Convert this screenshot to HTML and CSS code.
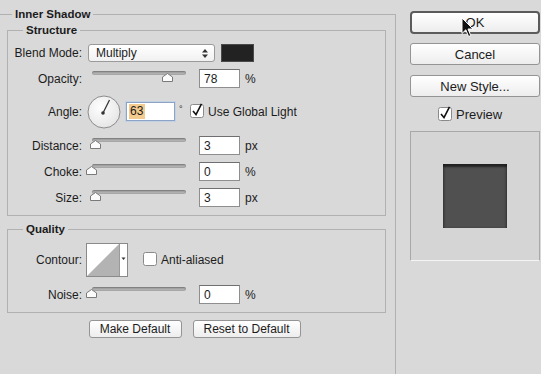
FILE: index.html
```html
<!DOCTYPE html>
<html lang="en">
<head>
    <meta charset="UTF-8">
    <title>Layer Style - Inner Shadow</title>
    <link rel="stylesheet" href="styles.css">
</head>
<body>
  <div class="dialog">

    <!-- left side: settings -->
    <div class="main">
      <fieldset class="group outer">
        <legend>Inner Shadow</legend>

        <fieldset class="group box structure">
          <legend>Structure</legend>

          <div class="row row-blend">
            <span class="label">Blend Mode:</span>
            <div class="select">
              <span>Multiply</span>
              <svg width="6" height="9" viewBox="0 0 6 9"><path d="M3 0 L6 3.5 H0 Z M0 5.5 H6 L3 9 Z" fill="#333"/></svg>
            </div>
            <span class="swatch"></span>
          </div>

          <div class="row">
            <span class="label">Opacity:</span>
            <div class="slider">
              <span class="track"></span>
              <svg class="thumb" style="left:70px" width="11" height="9" viewBox="0 0 11 9"><path d="M0.5 8.5 V4 L5.5 0.5 L10.5 4 V8.5 Z" fill="#fbfbfb" stroke="#7a7a7a"/></svg>
            </div>
            <span class="field">78</span>
            <span class="unit">%</span>
          </div>

          <div class="row row-angle">
            <span class="label">Angle:</span>
            <svg class="dial" width="34" height="34" viewBox="0 0 34 34">
              <defs>
                <radialGradient id="dialFill" cx="0.4" cy="0.35" r="0.7">
                  <stop offset="0" stop-color="#ffffff"/>
                  <stop offset="1" stop-color="#e4e4e4"/>
                </radialGradient>
              </defs>
              <circle cx="17" cy="17" r="16" fill="url(#dialFill)" stroke="#8c8c8c"/>
              <line x1="16" y1="18" x2="22.5" y2="5" stroke="#333" stroke-width="1.2"/>
              <circle cx="16" cy="18" r="1.8" fill="#333"/>
            </svg>
            <span class="field field-angle"><span class="sel">63</span></span>
            <span class="deg">°</span>
            <svg class="check" width="14" height="15" viewBox="0 0 14 15"><rect x="0.5" y="1.5" width="13" height="13" rx="2" fill="#fff" stroke="#8a8a8a"/><path d="M3 8 L6 11.5 L11.5 0.8" fill="none" stroke="#111" stroke-width="1.6"/></svg>
            <span class="check-text">Use Global Light</span>
          </div>

          <div class="row row-distance">
            <span class="label">Distance:</span>
            <div class="slider">
              <span class="track"></span>
              <svg class="thumb" style="left:-2px" width="11" height="9" viewBox="0 0 11 9"><path d="M0.5 8.5 V4 L5.5 0.5 L10.5 4 V8.5 Z" fill="#fbfbfb" stroke="#7a7a7a"/></svg>
            </div>
            <span class="field">3</span>
            <span class="unit">px</span>
          </div>

          <div class="row">
            <span class="label">Choke:</span>
            <div class="slider">
              <span class="track"></span>
              <svg class="thumb" style="left:-6px" width="11" height="9" viewBox="0 0 11 9"><path d="M0.5 8.5 V4 L5.5 0.5 L10.5 4 V8.5 Z" fill="#fbfbfb" stroke="#7a7a7a"/></svg>
            </div>
            <span class="field">0</span>
            <span class="unit">%</span>
          </div>

          <div class="row">
            <span class="label">Size:</span>
            <div class="slider">
              <span class="track"></span>
              <svg class="thumb" style="left:-2px" width="11" height="9" viewBox="0 0 11 9"><path d="M0.5 8.5 V4 L5.5 0.5 L10.5 4 V8.5 Z" fill="#fbfbfb" stroke="#7a7a7a"/></svg>
            </div>
            <span class="field">3</span>
            <span class="unit">px</span>
          </div>
        </fieldset>

        <fieldset class="group box quality">
          <legend>Quality</legend>

          <div class="row row-contour">
            <span class="label">Contour:</span>
            <svg class="contour" width="42" height="34" viewBox="0 0 42 34">
              <rect x="0.5" y="0.5" width="41" height="33" fill="#fff" stroke="#8a8a8a"/>
              <path d="M33 1 V33 H1 Z" fill="#b3b3b3"/>
              <line x1="33.5" y1="1" x2="33.5" y2="33" stroke="#9a9a9a"/>
              <path d="M35.5 14.5 H39.5 L37.5 17 Z" fill="#333"/>
            </svg>
            <svg class="check check-aa" width="14" height="15" viewBox="0 0 14 15"><rect x="0.5" y="1.5" width="13" height="13" rx="2" fill="#fff" stroke="#8a8a8a"/></svg>
            <span class="check-text">Anti-aliased</span>
          </div>

          <div class="row row-noise">
            <span class="label">Noise:</span>
            <div class="slider">
              <span class="track"></span>
              <svg class="thumb" style="left:-6px" width="11" height="9" viewBox="0 0 11 9"><path d="M0.5 8.5 V4 L5.5 0.5 L10.5 4 V8.5 Z" fill="#fbfbfb" stroke="#7a7a7a"/></svg>
            </div>
            <span class="field">0</span>
            <span class="unit">%</span>
          </div>
        </fieldset>

        <div class="defaults">
          <span class="btn small make">Make Default</span>
          <span class="btn small reset">Reset to Default</span>
        </div>
      </fieldset>
    </div>

    <!-- right side: buttons + preview -->
    <div class="side">
      <span class="btn big ok">OK</span>
      <span class="btn big cancel">Cancel</span>
      <span class="btn big newstyle">New Style...</span>
      <div class="preview-row">
        <svg class="check" width="14" height="15" viewBox="0 0 14 15"><rect x="0.5" y="1.5" width="13" height="13" rx="2" fill="#fff" stroke="#8a8a8a"/><path d="M3 8 L6 11.5 L11.5 0.8" fill="none" stroke="#111" stroke-width="1.6"/></svg>
        <span class="preview-text">Preview</span>
      </div>
      <div class="preview">
        <div class="sample"></div>
      </div>
    </div>

    <!-- mouse pointer over OK -->
    <svg class="cursor" width="13" height="21" viewBox="0 0 13 21">
      <path d="M1 1 V16.5 L4.8 12.8 L7.6 19.5 L9.8 18.6 L7 12 H12 Z" fill="#111" stroke="#fff" stroke-width="1"/>
    </svg>
  </div>
</body>
</html>
```

FILE: styles.css
```css
body {
  margin: 0;
  background-color: #d9d9d9;
  font-family: "Liberation Sans", Arial, sans-serif;
  font-size: 12px;
  color: #1c1c1c;
  overflow: hidden;
}

.dialog {
  position: relative;
  display: flex;
  width: 541px;
  height: 374px;
}

/* group boxes */
.group {
  border: 1px solid #b1b1b1;
  padding: 0;
  min-width: 0;
}

.group legend {
  font-weight: bold;
  font-size: 11.5px;
  line-height: 14px;
  padding: 0 3px;
}

.main {
  width: 396px;
  flex: none;
}

.outer {
  margin: 7px 0 0 0;
  border-left: none;
  border-bottom: none;
  height: 367px;
  box-sizing: border-box;
}

.outer > legend {
  margin-left: 12px;
}

.box {
  margin: 2px 9px 0 7px;
}

.box > legend {
  margin-left: 15px;
}

.structure {
  padding: 7px 0 8px 0;
}

.quality {
  margin-top: 6px;
  padding: 7px 0 8px 0;
}

/* rows */
.row {
  display: flex;
  align-items: center;
  height: 19px;
}

.row + .row {
  margin-top: 7px;
}

.row-blend {
  height: 18px;
}

.row-angle,
.row-contour {
  height: 33px;
}

.row-distance {
  margin-top: 8px !important;
}

.row-noise {
  margin-top: 9px !important;
}

.label {
  width: 74px;
  flex: none;
  text-align: right;
}

.select {
  display: flex;
  align-items: center;
  justify-content: space-between;
  box-sizing: border-box;
  width: 127px;
  height: 18px;
  margin-left: 6px;
  padding: 0 6px 0 7px;
  background: linear-gradient(#ffffff, #f1f1f1);
  border: 1px solid #9a9a9a;
  border-radius: 3px;
}

.swatch {
  width: 33px;
  height: 18px;
  margin-left: 6px;
  box-sizing: border-box;
  background-color: #222;
  border: 1px solid #4a4a4a;
}

.slider {
  position: relative;
  width: 94px;
  height: 19px;
  margin-left: 10px;
  flex: none;
}

.track {
  display: block;
  margin-top: 2px;
  height: 4px;
  border-radius: 2px;
  background: linear-gradient(#8c8c8c, #c6c6c6);
  box-shadow: inset 0 0 0 1px rgba(0, 0, 0, 0.12);
}

.thumb {
  position: absolute;
  top: 4px;
}

.field {
  box-sizing: border-box;
  width: 41px;
  height: 19px;
  margin-left: 13px;
  padding: 2px 4px;
  line-height: 14px;
  background: #fff;
  border: 1px solid #8e8e8e;
  border-top-color: #6f6f6f;
}

.unit {
  margin-left: 5px;
}

.dial {
  margin-left: 5px;
  flex: none;
}

.field-angle {
  width: 49px;
  margin-left: 5px;
  padding: 1px 2px;
  border-color: #8ea4c4;
  box-shadow: 0 0 0 1px #c3d1e4;
}

.sel {
  display: inline-block;
  padding: 0 2px 0 1px;
  line-height: 15px;
  background-color: #f4cb8e;
}

.deg {
  width: 15px;
  padding-left: 4px;
  box-sizing: border-box;
  font-size: 9px;
  align-self: flex-start;
  margin-top: 9px;
}

.check {
  flex: none;
  margin-top: -2px;
}

.check-text {
  margin-left: 4px;
}

.contour {
  margin-left: 4px;
  flex: none;
}

.check-aa {
  margin-left: 15px;
}

/* buttons */
.btn {
  display: flex;
  align-items: center;
  justify-content: center;
  box-sizing: border-box;
  background: linear-gradient(#ffffff, #ededed);
  border: 1px solid #949494;
  border-radius: 3px;
}

.defaults {
  display: flex;
  justify-content: center;
  gap: 11px;
  margin: 7px 13px 0 7px;
}

.small {
  height: 18px;
}

.make {
  width: 93px;
}

.reset {
  width: 108px;
}

.side {
  display: flex;
  flex-direction: column;
  margin-left: 14px;
  padding-top: 11px;
  width: 130px;
}

.big {
  height: 22px;
  font-size: 13px;
}

.ok {
  height: 23px;
  border: 2px solid #5b5b5b;
  border-radius: 4px;
}

.cancel {
  margin-top: 9px;
}

.newstyle {
  margin-top: 10px;
}

.preview-row {
  display: flex;
  align-items: center;
  margin-top: 10px;
  padding-left: 28px;
  height: 14px;
}

.preview-text {
  margin-left: 4px;
  font-size: 13px;
}

.preview {
  display: flex;
  align-items: center;
  justify-content: center;
  box-sizing: border-box;
  width: 130px;
  height: 130px;
  margin-top: 10px;
  background-color: #d5d5d5;
  border: 1px solid #a8a8a8;
  border-bottom-color: #f5f5f5;
}

.sample {
  width: 64px;
  height: 64px;
  background-color: #505050;
  box-shadow: inset 0 3px 2px rgba(0, 0, 0, 0.55), inset 2px 0 2px rgba(0, 0, 0, 0.15), inset -2px 0 2px rgba(0, 0, 0, 0.15);
}

.cursor {
  position: absolute;
  left: 461px;
  top: 17px;
}
```
